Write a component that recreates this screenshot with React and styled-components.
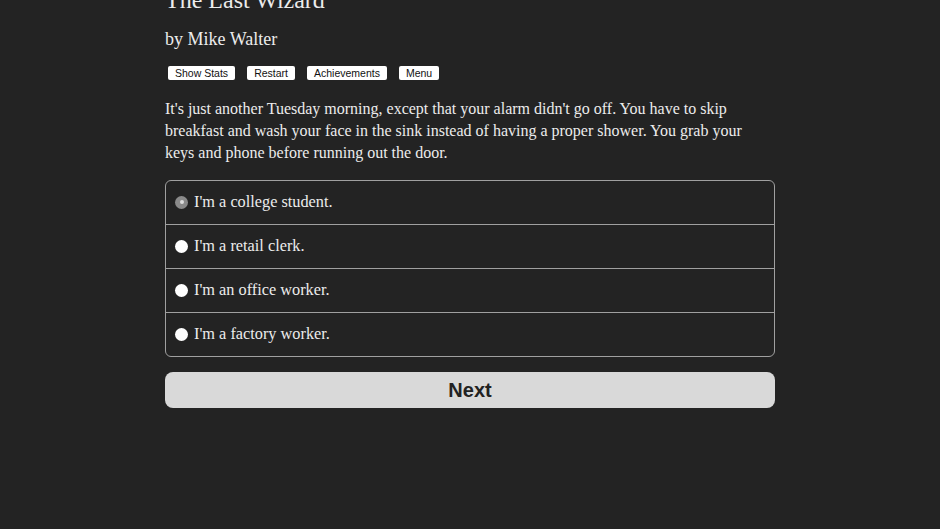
import React, { useState } from "react";
import styled, { createGlobalStyle } from "styled-components";

const GlobalStyle = createGlobalStyle`
    html, body {
        margin: 0;
        padding: 0;
        background-color: #232323;
    }
    body {
        font-family: "Liberation Serif", "DejaVu Serif", serif;
        color: #ececec;
    }
`;

const Page = styled.div`
    width: 610px;
    margin: 0 auto;
`;

const Title = styled.h1`
    font-size: 24px;
    font-weight: normal;
    margin: -14px 0 0 0;
    line-height: 28px;
`;

const Author = styled.h2`
    font-size: 18px;
    font-weight: normal;
    margin: 14px 0 0 0;
    line-height: 22px;
`;

const Toolbar = styled.div`
    display: flex;
    gap: 12px;
    margin: 16px 0 0 3px;
`;

const ToolButton = styled.button`
    font-family: "Liberation Sans", Arial, sans-serif;
    font-size: 10.5px;
    line-height: 12px;
    height: 14px;
    padding: 0 7px;
    background: #fff;
    color: #111;
    border: none;
    border-radius: 2px;
    cursor: pointer;
`;

const Passage = styled.p`
    font-size: 16px;
    line-height: 22px;
    margin: 18px 0 0 0;
`;

const Choices = styled.div`
    margin-top: 16px;
    border: 1px solid #a0a0a0;
    border-radius: 6px;
    overflow: hidden;
`;

const Choice = styled.label`
    display: flex;
    align-items: center;
    gap: 6px;
    height: 41px;
    padding: 0 0 2px 9px;
    font-size: 16.3px;
    border-top: ${(p) => (p.$first ? "none" : "1px solid #a0a0a0")};
    cursor: pointer;
`;

const Radio = styled.span`
    width: 13px;
    height: 13px;
    margin-top: 1px;
    border-radius: 50%;
    background: ${(p) => (p.$checked ? "#8a8a8a" : "#fff")};
    display: flex;
    align-items: center;
    justify-content: center;
    &::after {
        content: "";
        width: 4px;
        height: 4px;
        border-radius: 50%;
        background: #ddd;
        display: ${(p) => (p.$checked ? "block" : "none")};
    }
`;

const NextButton = styled.button`
    display: block;
    width: 100%;
    height: 36px;
    margin-top: 15px;
    background: #d9d9d9;
    color: #222;
    border: none;
    border-radius: 8px;
    font-family: "Liberation Sans", Arial, sans-serif;
    font-weight: bold;
    font-size: 20px;
    cursor: pointer;
`;

const options = [
    "I'm a college student.",
    "I'm a retail clerk.",
    "I'm an office worker.",
    "I'm a factory worker.",
];

export default function App() {
    const [selected, setSelected] = useState(0);
    return (
        <>
            <GlobalStyle />
            <Page>
                <Title>The Last Wizard</Title>
                <Author>by Mike Walter</Author>
                <Toolbar>
                    <ToolButton>Show Stats</ToolButton>
                    <ToolButton>Restart</ToolButton>
                    <ToolButton>Achievements</ToolButton>
                    <ToolButton>Menu</ToolButton>
                </Toolbar>
                <Passage>
                    It's just another Tuesday morning, except that your alarm didn't go off. You have to skip
                    breakfast and wash your face in the sink instead of having a proper shower. You grab your
                    keys and phone before running out the door.
                </Passage>
                <Choices>
                    {options.map((o, i) => (
                        <Choice key={o} $first={i === 0} onClick={() => setSelected(i)}>
                            <Radio $checked={selected === i} />
                            {o}
                        </Choice>
                    ))}
                </Choices>
                <NextButton>Next</NextButton>
            </Page>
        </>
    );
}
